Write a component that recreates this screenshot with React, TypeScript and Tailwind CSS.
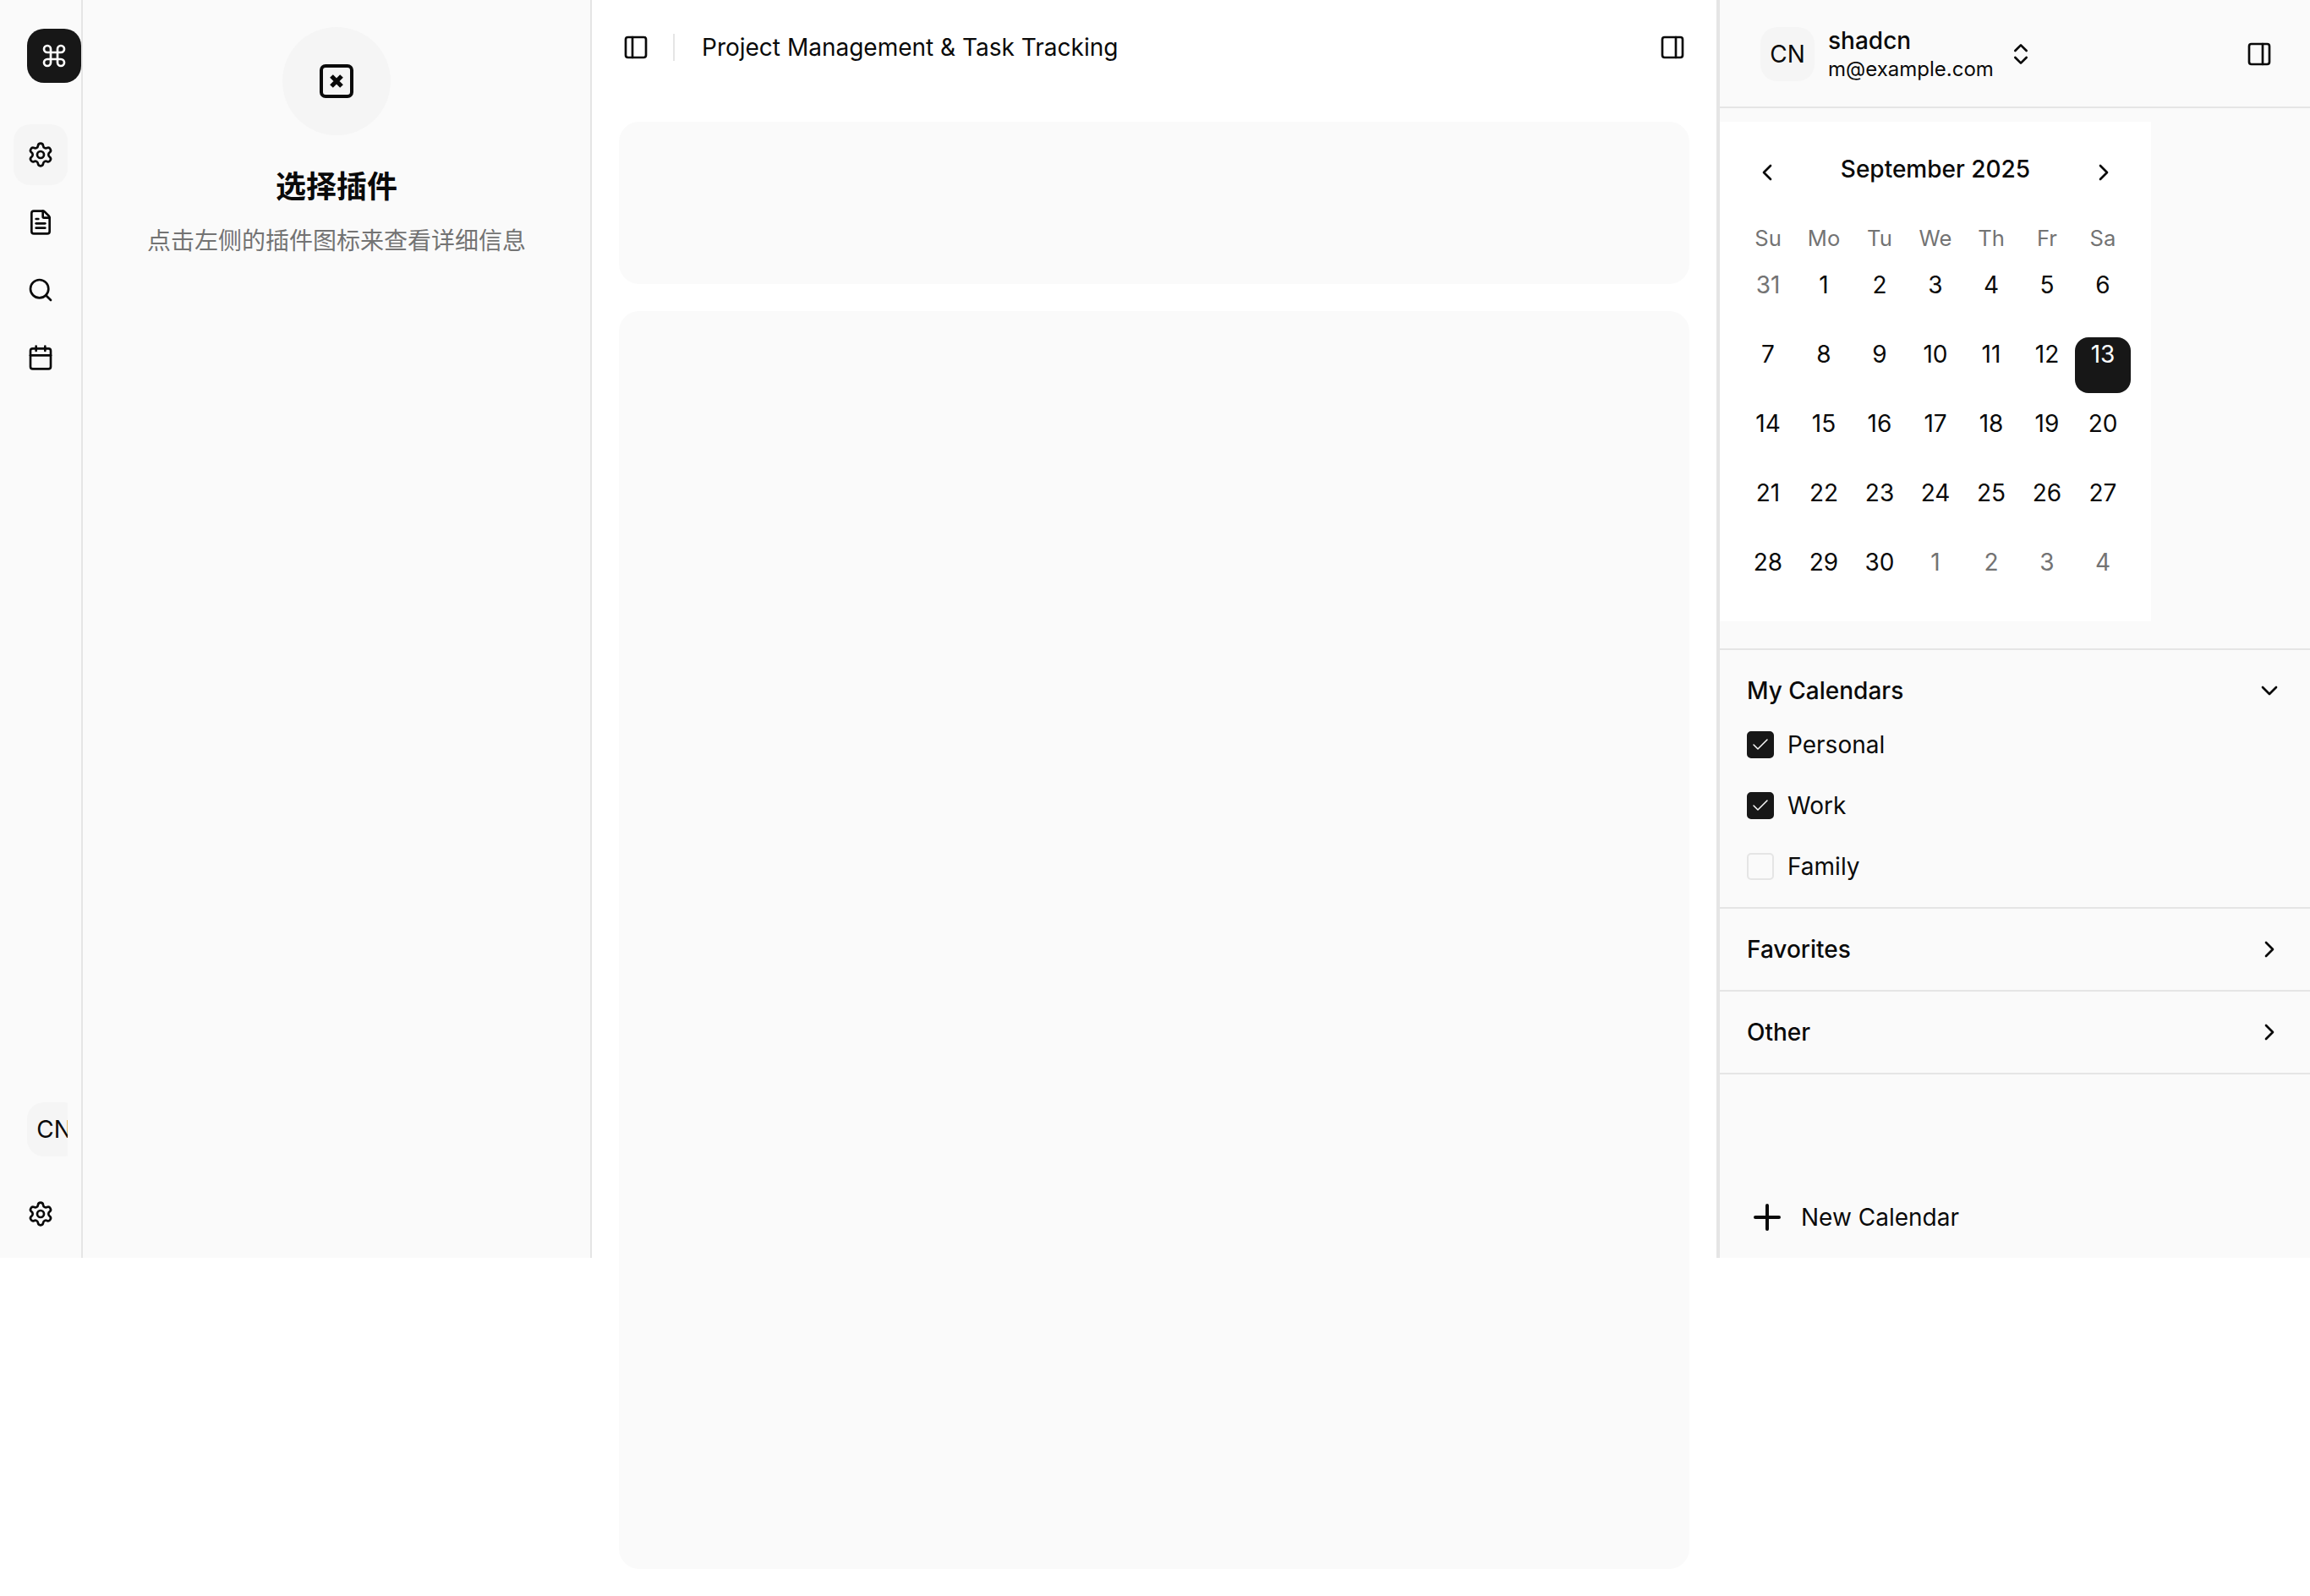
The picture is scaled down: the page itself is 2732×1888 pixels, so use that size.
import {
  Calendar,
  Check,
  ChevronDown,
  ChevronLeft,
  ChevronRight,
  ChevronsUpDown,
  Command,
  FileText,
  PanelLeft,
  PanelRight,
  Plus,
  Search,
  Settings,
} from 'lucide-react';

const WEEKDAYS = ['Su', 'Mo', 'Tu', 'We', 'Th', 'Fr', 'Sa'];

const DAYS = [
  { label: '31', muted: true },
  ...Array.from({ length: 30 }, (_, i) => ({ label: String(i + 1), muted: false })),
  { label: '1', muted: true },
  { label: '2', muted: true },
  { label: '3', muted: true },
  { label: '4', muted: true },
];

const CALENDARS = [
  { name: 'Personal', checked: true },
  { name: 'Work', checked: true },
  { name: 'Family', checked: false },
];

// lucide's square-x, but the cross is heavier in the picture
function SquareCross() {
  return (
    <svg width="48" height="48" viewBox="0 0 24 24" fill="none" stroke="currentColor" strokeWidth="2" strokeLinejoin="round">
      <rect x="3" y="3" width="18" height="18" rx="2.5" />
      <path d="M15 9l-6 6M9 9l6 6" strokeWidth="2.6" />
    </svg>
  );
}

function Rail() {
  const items = [Settings, FileText, Search, Calendar];
  return (
    <nav className="flex h-[1488px] w-[98px] shrink-0 flex-col border-r-2 border-[#e5e5e5] bg-[#fafafa] pt-[34px] pb-4">
      <div className="ml-8 flex size-16 items-center justify-center rounded-[20px] bg-[#171717] text-white">
        <Command size={32} />
      </div>
      <div className="mt-[49px] flex flex-col gap-2 px-4">
        {items.map((Icon, i) => (
          <button
            key={i}
            type="button"
            className={`flex h-[72px] w-16 items-center justify-center rounded-[20px] ${i === 0 ? 'bg-[#f5f5f5]' : ''}`}
          >
            <Icon size={32} />
          </button>
        ))}
      </div>
      <div className="mt-auto ml-8 w-12 overflow-hidden">
        <div className="flex size-16 items-center justify-center rounded-[20px] bg-[#f5f5f5] text-[28px]">CN</div>
      </div>
      <button type="button" className="mt-8 ml-4 flex h-[72px] w-16 items-center justify-center">
        <Settings size={32} />
      </button>
    </nav>
  );
}

function PluginPanel() {
  return (
    <aside className="flex h-[1488px] w-[602px] shrink-0 flex-col items-center border-r-2 border-[#e5e5e5] bg-[#fafafa] pt-8">
      <div className="flex size-32 items-center justify-center rounded-full bg-[#f5f5f5]">
        <SquareCross />
      </div>
      <h2 className="mt-[41px] text-[36px] leading-10 font-semibold">选择插件</h2>
      <p className="mt-6 text-[28px] leading-10 text-[#737373]">点击左侧的插件图标来查看详细信息</p>
    </aside>
  );
}

function MainContent() {
  return (
    <main className="flex h-[1888px] w-[1330px] shrink-0 flex-col bg-white px-8 pb-8">
      <header className="flex h-[112px] shrink-0 items-center">
        <PanelLeft size={32} className="ml-1" />
        <div className="mr-8 ml-[28px] h-8 w-0.5 bg-[#e5e5e5]" />
        <h1 className="text-[28px]">Project Management &amp; Task Tracking</h1>
        <PanelRight size={32} className="mr-[4px] ml-auto" />
      </header>
      <div className="mt-8 flex min-h-0 flex-1 flex-col gap-8">
        <div className="h-48 rounded-3xl bg-[#fafafa]" />
        <div className="flex-1 rounded-3xl bg-[#fafafa]" />
      </div>
    </main>
  );
}

function MiniCalendar() {
  return (
    <div className="mt-4 w-[510px] bg-white p-6">
      <div className="flex h-[72px] items-center justify-between px-4">
        <ChevronLeft size={32} />
        <span className="mb-2 text-[28px] font-medium">September 2025</span>
        <ChevronRight size={32} />
      </div>
      <div className="mt-[22px] grid grid-cols-[repeat(7,66px)]">
        {WEEKDAYS.map((d) => (
          <span key={d} className="h-10 text-center text-[25.6px] leading-10 text-[#737373]">
            {d}
          </span>
        ))}
      </div>
      <div className="mt-[15px] grid grid-cols-[repeat(7,66px)] gap-y-4">
        {DAYS.map((d, i) => (
          <div
            key={i}
            className={`h-[66px] rounded-2xl text-center text-[28px] leading-10 ${
              d.label === '13' && !d.muted ? 'bg-[#171717] text-white' : d.muted ? 'text-[#737373]' : ''
            }`}
          >
            {d.label}
          </div>
        ))}
      </div>
    </div>
  );
}

function RightSidebar() {
  return (
    <aside className="flex h-[1488px] w-[702px] shrink-0 flex-col border-l-4 border-[#e5e5e5] bg-[#fafafa]">
      <div className="flex h-32 shrink-0 items-start border-b-2 border-[#e5e5e5] pt-8">
        <div className="ml-12 flex size-16 items-center justify-center rounded-[20px] bg-[#f5f5f5] text-[28px]">CN</div>
        <div className="-mt-0.5 ml-4 flex w-[212px] flex-col">
          <span className="text-[28px] leading-9 font-medium">shadcn</span>
          <span className="text-2xl leading-8">m@example.com</span>
        </div>
        <ChevronsUpDown size={32} className="mt-4" />
        <PanelRight size={32} className="mt-4 mr-11 ml-auto" />
      </div>

      <MiniCalendar />

      <div className="mt-8 border-y-2 border-[#e5e5e5] pb-8">
        <div className="flex h-24 items-center justify-between px-8 text-[28px] font-medium">
          My Calendars
          <ChevronDown size={32} />
        </div>
        <div className="flex flex-col gap-10 px-8">
          {CALENDARS.map((c) => (
            <label key={c.name} className="flex h-8 items-center gap-4 text-[28px]">
              <span
                className={`flex size-8 items-center justify-center rounded-[5px] border-2 ${
                  c.checked ? 'border-[#171717] bg-[#171717] text-[#fafafa]' : 'border-[#e5e5e5]'
                }`}
              >
                {c.checked && <Check size={24} strokeWidth={1.5} />}
              </span>
              {c.name}
            </label>
          ))}
        </div>
      </div>
      {['Favorites', 'Other'].map((name) => (
        <div
          key={name}
          className="flex h-[98px] shrink-0 items-center justify-between border-b-2 border-[#e5e5e5] px-8 text-[28px] font-medium"
        >
          {name}
          <ChevronRight size={32} />
        </div>
      ))}

      <div className="mt-auto flex items-center gap-4 pb-6 pl-8 text-[28px]">
        <Plus size={48} />
        New Calendar
      </div>
    </aside>
  );
}

export default function App() {
  return (
    <div className="flex h-[1888px] w-[2732px] items-start overflow-hidden bg-white font-['Inter','Noto_Sans_CJK_SC',sans-serif] text-[#0a0a0a]">
      <Rail />
      <PluginPanel />
      <MainContent />
      <RightSidebar />
    </div>
  );
}
